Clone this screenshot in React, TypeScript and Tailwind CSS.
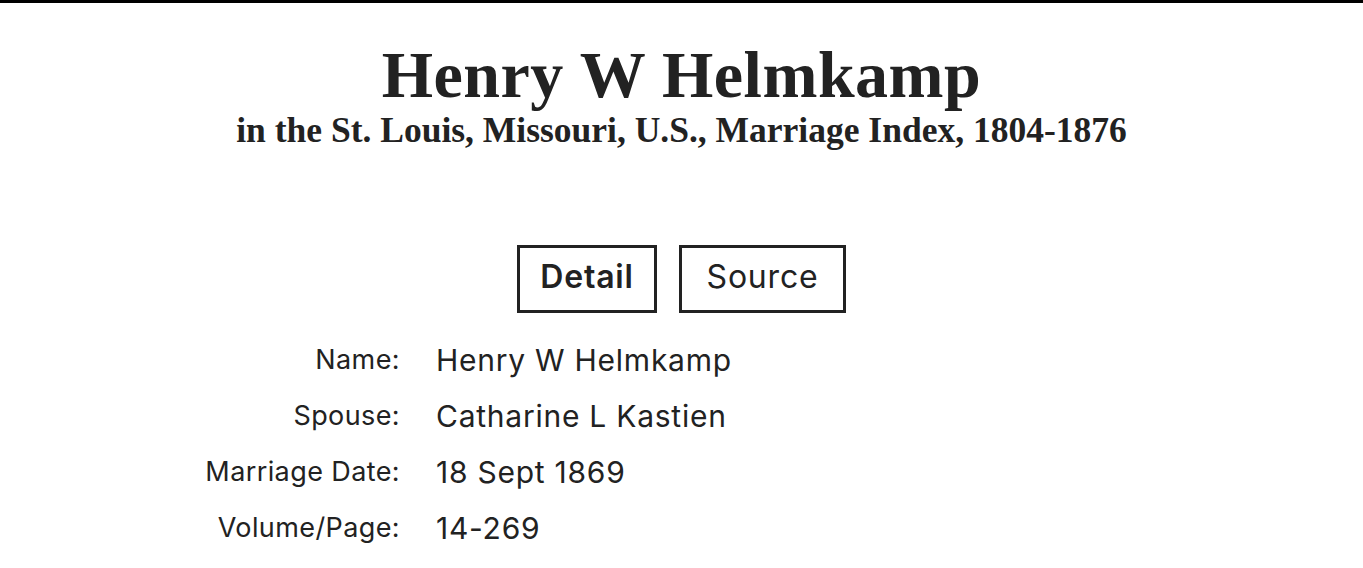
const rows: [string, string][] = [
  ["Name:", "Henry W Helmkamp"],
  ["Spouse:", "Catharine L Kastien"],
  ["Marriage Date:", "18 Sept 1869"],
  ["Volume/Page:", "14-269"],
];

export default function App() {
  return (
    <div className="min-h-screen bg-white text-[#222222] border-t-[3px] border-black">
      <header className="pt-[39px] text-center font-['Liberation_Serif',serif]">
        <h1 className="text-[66px] font-bold leading-[66px] tracking-[0.5px]">Henry W Helmkamp</h1>
        <h2 className="mt-[2px] text-[35.5px] font-bold leading-[40px]">
          in the St. Louis, Missouri, U.S., Marriage Index, 1804-1876
        </h2>
      </header>

      <nav className="mt-[95px] flex justify-center gap-[22px] font-['Inter',sans-serif] text-[32px] tracking-[0.8px]">
        <button className="h-[68px] w-[140px] border-[3px] border-[#222222] pb-[5px] font-semibold">Detail</button>
        <button className="h-[68px] w-[167px] border-[3px] border-[#222222] pb-[5px]">Source</button>
      </nav>

      <dl className="mt-[19px] grid grid-cols-[400px_1fr] gap-x-[36px] font-['Inter',sans-serif]">
        {rows.map(([label, value]) => (
          <div key={label} className="contents">
            <dt className="h-[56px] flex items-center justify-end text-[27px] tracking-[0.4px]">{label}</dt>
            <dd className="h-[56px] flex items-center text-[30px] tracking-[0.75px]">{value}</dd>
          </div>
        ))}
      </dl>
    </div>
  );
}
